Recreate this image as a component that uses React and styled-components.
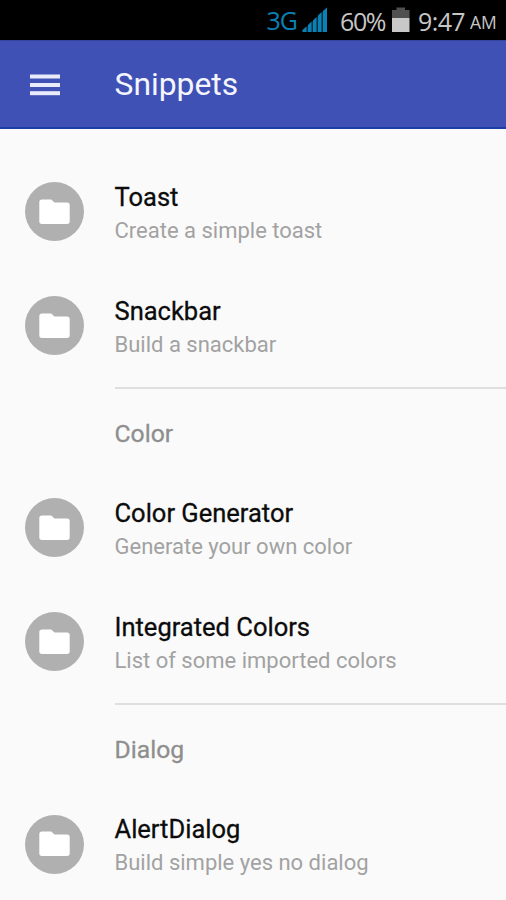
import React from 'react';
import styled, { createGlobalStyle } from 'styled-components';

const GlobalStyle = createGlobalStyle`
  * {
    box-sizing: border-box;
  }

  body {
    margin: 0;
    background-color: #fafafa;
    font-family: Roboto, sans-serif;
  }
`;

// Styled components
const Screen = styled.div`
  width: 506px;
  height: 900px;
  overflow: hidden;
  background-color: #fafafa;
`;

const StatusBar = styled.div`
  display: flex;
  justify-content: flex-end;
  height: 40px;
  padding-right: 9px;
  background-color: #000;
  color: #c6c6c6;
  font-family: 'Open Sans', 'Noto Sans', sans-serif;
  white-space: nowrap;

  svg {
    display: block;
    flex: none;
  }
`;

const StatusText = styled.span`
  flex: none;
  width: ${props => props.$width}px;
  margin-left: ${props => props.$gap || 0}px;
  color: ${props => props.$color || 'inherit'};
  font-size: ${props => props.$size || 25}px;
  letter-spacing: ${props => props.$spacing || 0}px;
  line-height: ${props => props.$line || 42}px;
`;

const StatusBattery = styled.div`
  flex: none;
  margin-left: 6px;
`;

const Toolbar = styled.header`
  display: flex;
  align-items: center;
  height: 89px;
  padding-left: 30px;
  background-color: #3f51b5;
  border-top: 1px solid #35449c;
  border-bottom: 2px solid #1c3ca6;
`;

const MenuButton = styled.button`
  display: flex;
  width: 84.5px;
  padding: 1px 0 0;
  border: none;
  background: none;
  cursor: pointer;
`;

const ToolbarTitle = styled.h1`
  margin: 0;
  color: #f4f5fd;
  font-size: 31.8px;
  font-weight: 400;
  line-height: 40px;
`;

const List = styled.main`
  padding-top: 26px;
`;

const Section = styled.section`
  & + & {
    margin-top: 4.5px;
  }
`;

const SectionTitle = styled.h2`
  height: 84px;
  margin: 0 0 0 114.5px;
  border-top: 2px solid #dfdfdf;
  color: #8e8e8e;
  font-size: 24.7px;
  font-weight: 400;
  line-height: 89px;
  -webkit-text-stroke: 0.3px;
`;

const Item = styled.div`
  display: flex;
  align-items: center;
  height: 113.8px;
  padding-left: 25px;
  cursor: pointer;
`;

const Avatar = styled.div`
  display: flex;
  align-items: center;
  justify-content: center;
  width: 59px;
  height: 59px;
  margin-right: 30.5px;
  border-radius: 50%;
  background-color: #b0b0b0;
`;

const ItemLabel = styled.div`
  padding-top: 4.5px;
  line-height: 33px;
  white-space: nowrap;
`;

const ItemTitle = styled.div`
  color: #0c0c0c;
  font-size: 25.5px;
  -webkit-text-stroke: 0.3px;
`;

const ItemText = styled.div`
  color: #a2a2a2;
  font-size: 22px;
`;

// Icons
const SignalIcon = () => (
  <svg width="27" height="40" viewBox="0 0 27 40" fill="#0b80b4">
    <path d="M0.5 32V30L4.5 26.5V32ZM6 32V25L9.5 21.5V32ZM11 32V20.5L14.5 17V32ZM16 32V15.5L19.5 12V32ZM21 32V11L25 7.5V32Z" />
    <path d="M0.5 32V30.5L25 7.5V32Z" fillOpacity="0.35" />
  </svg>
);

const BatteryIcon = () => (
  <svg width="18" height="40" viewBox="0 0 18 40">
    <path d="M4.5 7.5H13V10H17.5V18H0V10H4.5Z" fill="#505050" />
    <rect y="18" width="17.5" height="14" fill="#c8c8c8" />
  </svg>
);

const MenuIcon = () => (
  <svg width="30" height="22" viewBox="0 0 30 22" fill="#e9ebfa">
    <rect y="0.5" width="30" height="4" />
    <rect y="9" width="30" height="4" />
    <rect y="17.2" width="30" height="4" />
  </svg>
);

const FolderIcon = () => (
  <svg width="31" height="26" viewBox="0 0 31 26" fill="#fff">
    <path d="M3 0.5H12.2L15.5 3.5H28A2.8 2.8 0 0 1 30.7 6.3V22.2A2.8 2.8 0 0 1 28 25H3A2.8 2.8 0 0 1 0.3 22.2V3.3A2.8 2.8 0 0 1 3 0.5Z" />
  </svg>
);

const sections = [
  {
    items: [
      { title: 'Toast', text: 'Create a simple toast' },
      { title: 'Snackbar', text: 'Build a snackbar' }
    ]
  },
  {
    name: 'Color',
    items: [
      { title: 'Color Generator', text: 'Generate your own color' },
      { title: 'Integrated Colors', text: 'List of some imported colors' }
    ]
  },
  {
    name: 'Dialog',
    items: [
      { title: 'AlertDialog', text: 'Build simple yes no dialog' }
    ]
  }
];

const App = () => {
  return (
    <Screen>
      <GlobalStyle />
      <StatusBar>
        <StatusText $width={35.5} $color="#0b80b4" $spacing={-1} $line={41}>3G</StatusText>
        <SignalIcon />
        <StatusText $width={46} $gap={11} $spacing={-1.4}>60%</StatusText>
        <StatusBattery>
          <BatteryIcon />
        </StatusBattery>
        <StatusText $width={52} $gap={8} $spacing={-0.6}>9:47</StatusText>
        <StatusText $width={27} $size={17.5} $line={45}>AM</StatusText>
      </StatusBar>

      <Toolbar>
        <MenuButton aria-label="Menu">
          <MenuIcon />
        </MenuButton>
        <ToolbarTitle>Snippets</ToolbarTitle>
      </Toolbar>

      <List>
        {sections.map((section, index) => (
          <Section key={index}>
            {section.name && <SectionTitle>{section.name}</SectionTitle>}
            {section.items.map(item => (
              <Item key={item.title}>
                <Avatar>
                  <FolderIcon />
                </Avatar>
                <ItemLabel>
                  <ItemTitle>{item.title}</ItemTitle>
                  <ItemText>{item.text}</ItemText>
                </ItemLabel>
              </Item>
            ))}
          </Section>
        ))}
      </List>
    </Screen>
  );
};

export default App;
